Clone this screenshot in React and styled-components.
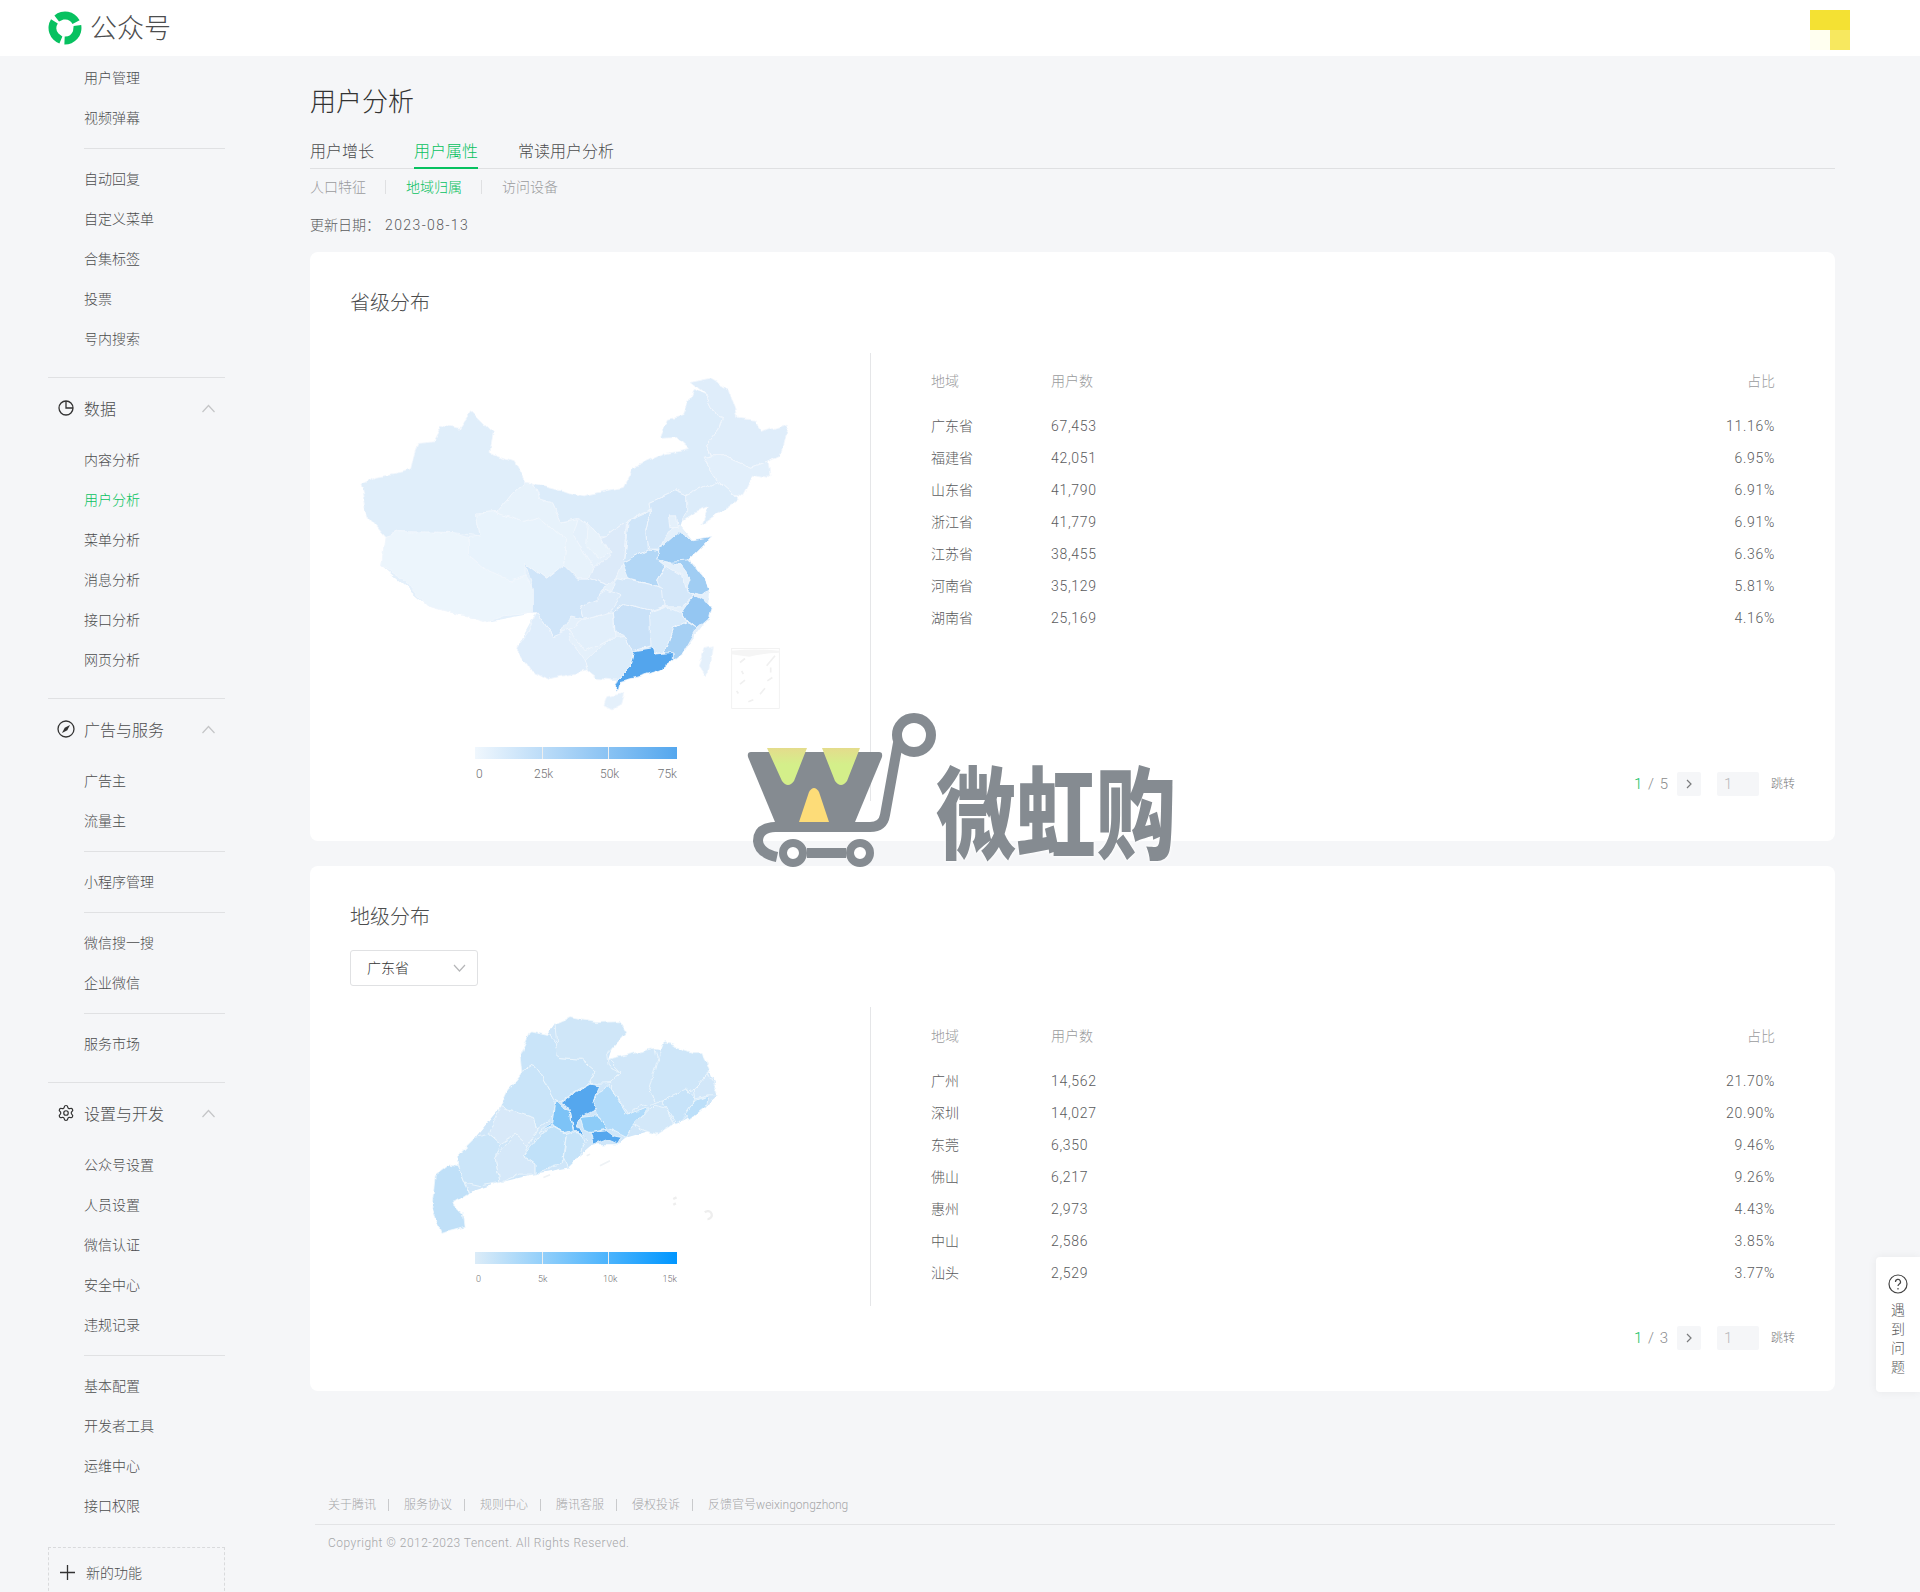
import React from 'react';
import styled, { createGlobalStyle } from 'styled-components';
import { Settings } from 'lucide-react';

const Global = createGlobalStyle`
  html, body { margin: 0; padding: 0; background: #f5f6f8; }
  body { font-family: Roboto, "Noto Sans CJK SC", sans-serif; font-weight: 300; color: #333; }
`;

const Page = styled.div`
  position: relative;
  width: 1920px;
  height: 1592px;
  overflow: hidden;
`;

const Header = styled.header`
  height: 56px;
  background: #fff;
  display: flex;
  align-items: center;
  justify-content: space-between;
  padding: 0 70px 0 48px;
`;

const Brand = styled.div`
  display: flex;
  align-items: center;
  gap: 8px;
  font-size: 27px;
  color: #4c4d4e;
  span { margin-bottom: 4px; }
`;

const Avatar = styled.div`
  width: 40px;
  height: 40px;
  margin-top: 4px;
  background:
    linear-gradient(#f4e133, #f4e133) top / 100% 50% no-repeat,
    linear-gradient(#f7e85f, #f7e85f) bottom right / 50% 50% no-repeat,
    #fffff0;
`;

const Body = styled.div`
  display: flex;
`;

const Side = styled.aside`
  width: 310px;
  flex: none;
  padding: 2px 85px 0 48px;
  box-sizing: border-box;
`;

const NavItem = styled.div`
  height: 40px;
  line-height: 40px;
  padding-left: 36px;
  font-size: 14px;
  color: ${p => (p.$active ? '#07c160' : '#4c4d4e')};
`;

const NavLine = styled.div`
  height: 1px;
  background: #e0e1e3;
  margin: ${p => (p.$full ? '18px 0 0' : '10px 0 10px 36px')};
`;

const NavHead = styled.div`
  display: flex;
  align-items: center;
  height: 60px;
  padding: 0 10px 2px 9px;
  font-size: 16px;
  color: #4c4d4e;
  gap: 9px;
  span { flex: 1; }
`;

const NewBox = styled.div`
  margin-top: 21px;
  height: 48px;
  border: 1px dashed #d9dadc;
  border-bottom: none;
  padding: 0 11px;
  display: flex;
  align-items: center;
  gap: 11px;
  font-size: 14px;
  color: #4c4d4e;
`;

const Main = styled.main`
  width: 1525px;
  flex: none;
`;

const Title = styled.h1`
  margin: 30px 0 0;
  font-size: 26px;
  line-height: 32px;
  font-weight: 300;
  color: #333;
`;

const Tabs = styled.div`
  display: flex;
  gap: 40px;
  margin-top: 20px;
  height: 30px;
  border-bottom: 1px solid #dfe0e2;
`;

const Tab = styled.div`
  font-size: 16px;
  line-height: 28px;
  height: 31px;
  box-sizing: border-box;
  color: ${p => (p.$active ? '#07c160' : '#4c4d4e')};
  border-bottom: ${p => (p.$active ? '2px solid #07c160' : 'none')};
`;

const SubTabs = styled.div`
  display: flex;
  align-items: center;
  height: 36px;
`;

const SubTab = styled.div`
  font-size: 14px;
  color: ${p => (p.$active ? '#07c160' : '#9a9b9d')};
  padding-right: 19px;
  margin-right: 20px;
  line-height: 14px;
  border-right: ${p => (p.$last ? 'none' : '1px solid #dfe0e2')};
`;

const UpdateDate = styled.div`
  font-size: 14px;
  line-height: 20px;
  margin-top: 10px;
  color: #5a5b5d;
  span { margin-left: 5px; letter-spacing: 1.4px; }
`;

const Card = styled.section`
  background: #fff;
  border-radius: 8px;
  box-sizing: border-box;
  height: ${p => p.$h}px;
  margin-top: ${p => p.$top}px;
  padding: 37px 40px 0;
`;

const CardTitle = styled.h2`
  margin: 0;
  font-size: 20px;
  line-height: 28px;
  font-weight: 300;
  color: #4c4d4e;
`;

const Select = styled.div`
  width: 128px;
  height: 36px;
  box-sizing: border-box;
  margin-top: 19px;
  border: 1px solid #e0e1e3;
  border-radius: 3px;
  padding: 0 11px 2px 16px;
  display: flex;
  align-items: center;
  justify-content: space-between;
  font-size: 14px;
  color: #333;
`;

const Split = styled.div`
  display: flex;
  margin-top: ${p => p.$top}px;
  height: ${p => p.$h}px;
`;

const MapCol = styled.div`
  width: 521px;
  flex: none;
  box-sizing: border-box;
  border-right: 1px solid #e5e6e8;
`;

const MapSvg = styled.svg`
  display: block;
  width: ${p => p.$w}px;
  height: ${p => p.$hh}px;
  margin: ${p => p.$m};
  overflow: visible;
`;

const Legend = styled.div`
  width: 202px;
  margin-left: 125px;
  margin-top: ${p => p.$top}px;
`;

const Bar = styled.div`
  height: 12px;
  background: ${p => p.$g};
  position: relative;
  &::before, &::after {
    content: '';
    position: absolute;
    top: 0;
    bottom: 0;
    width: 1px;
    background: #eee;
  }
  &::before { left: 67px; }
  &::after { left: 133px; }
`;

const LegendLabels = styled.div`
  display: grid;
  grid-template-columns: ${p => p.$cols};
  margin-top: 8px;
  font-size: ${p => p.$size}px;
  line-height: 14px;
  color: #6f7073;
  span:first-child { padding-left: 1px; }
`;

const TableWrap = styled.div`
  flex: 1;
  padding: ${p => p.$pt}px 20px 0 60px;
`;

const Row = styled.div`
  display: grid;
  grid-template-columns: 120px 1fr auto;
  height: ${p => (p.$head ? 37 : 32)}px;
  line-height: ${p => (p.$head ? 16 : 32)}px;
  font-size: 14px;
  color: ${p => (p.$head ? '#9a9b9d' : '#5a5b5d')};
  letter-spacing: ${p => (p.$head ? 0 : 0.7)}px;
  span:first-child { letter-spacing: 0; }
`;

const Pager = styled.div`
  display: flex;
  justify-content: flex-end;
  align-items: center;
  margin-top: ${p => p.$top}px;
  height: 24px;
  font-size: 15px;
  color: #8a8b8d;
  b { font-weight: 300; color: #07c160; }
`;

const PageNo = styled.div`
  word-spacing: 2px;
`;

const PageBtn = styled.div`
  width: 24px;
  height: 24px;
  margin: 0 16px 0 9px;
  background: #f5f6f8;
  border-radius: 2px;
  display: flex;
  align-items: center;
  justify-content: center;
`;

const PageInput = styled.div`
  width: 42px;
  height: 24px;
  line-height: 24px;
  box-sizing: border-box;
  padding-left: 7px;
  background: #f5f6f8;
  border-radius: 2px;
  color: #b5b6b8;
  margin-right: 12px;
`;

const Jump = styled.div`
  font-size: 12px;
  line-height: 24px;
  height: 24px;
  color: #7a7b7d;
`;

const Footer = styled.footer`
  margin: 100px 0 0 5px;
`;

const FootLinks = styled.div`
  display: flex;
  height: 28px;
  padding: 0 0 5px 13px;
  align-items: center;
  border-bottom: 1px solid #e3e4e6;
  font-size: 12px;
  color: #a5a6a8;
`;

const FootLink = styled.span`
  padding-right: ${p => (p.$last ? 0 : 12)}px;
  margin-right: ${p => (p.$last ? 0 : 15)}px;
  line-height: 12px;
  border-right: ${p => (p.$last ? 'none' : '1px solid #c9cacc')};
`;

const Copy = styled.div`
  padding-left: 13px;
  margin-top: 10px;
  font-size: 12px;
  line-height: 16px;
  color: #a5a6a8;
  letter-spacing: 0.47px;
`;

const Help = styled.div`
  position: absolute;
  right: 0;
  top: 1257px;
  width: 44px;
  height: 135px;
  background: #fff;
  border-radius: 4px 0 0 4px;
  box-shadow: 0 0 10px rgba(0,0,0,.06);
  display: flex;
  flex-direction: column;
  align-items: center;
  padding-top: 17px;
  box-sizing: border-box;
  font-size: 14px;
  line-height: 19px;
  color: #5a5b5d;
  svg { margin-bottom: 7px; }
`;

const Watermark = styled.div`
  position: absolute;
  left: 745px;
  top: 710px;
  width: 450px;
  height: 160px;
`;

const MarkText = styled.span`
  position: absolute;
  left: 191px;
  top: 47px;
  font-family: "Noto Sans CJK SC", sans-serif;
  font-weight: 900;
  font-size: 80px;
  line-height: 100px;
  color: #858b91;
  white-space: nowrap;
  transform: scaleY(1.25);
  text-shadow: 0 0 2px #fff, 0 0 4px #fff;
`;

const Chevron = () => (
  <svg width="13" height="13" viewBox="0 0 13 13" fill="none" stroke="#c4c5c7" strokeWidth="1.2"><path d="M.5 10 6.500 3.500 12.500 10" /></svg>
);

const chinaBase = '600,450 860,515 935,480 1020,525 1060,575 1050,630 1110,720 1105,810 1030,910 960,965 840,1000 745,965 625,990 530,900 590,790 435,820 265,770 125,650 135,562 410,495 555,400';

const chinaShapes = [
  ['#e0eefa', '60,405 110,382 215,362 235,280 280,275 305,228 355,240 395,185 460,250 450,310 520,335 555,400 520,430 470,490 410,495 420,560 335,550 180,548 135,562 90,510 75,470'],
  ['#ecf5fc', '135,562 180,548 335,550 385,565 385,620 440,665 510,695 555,680 580,720 580,790 545,795 490,800 435,820 335,790 265,770 190,690 125,650'],
  ['#e8f3fc', '410,495 470,490 550,520 600,505 680,575 670,650 620,690 555,640 555,680 510,695 440,665 385,620 385,565 420,560'],
  ['#e7f2fb', '555,400 580,402 600,450 635,460 660,515 715,505 700,555 745,630 760,650 745,690 710,690 670,650 680,575 600,505 550,520 470,490 520,430'],
  ['#dcecfa', '580,402 730,440 850,415 880,355 980,310 1045,298 1010,265 960,268 985,210 1030,200 1060,120 1100,140 1130,200 1150,205 1140,240 1100,290 1115,320 1090,325 1135,395 1040,440 1005,425 930,460 935,480 860,515 800,560 780,560 745,520 715,505 660,515 635,460 600,450'],
  ['#dfedfa', '1050,100 1110,88 1165,120 1195,205 1250,210 1265,250 1345,225 1320,320 1285,335 1230,355 1150,320 1115,320 1100,290 1140,240 1150,205 1130,200 1100,140'],
  ['#e2effb', '1090,325 1115,320 1150,320 1230,355 1285,335 1290,385 1240,375 1205,440 1180,435 1135,395'],
  ['#dcecfa', '1040,440 1135,395 1180,435 1195,450 1085,525 1105,475 1065,490 1020,520 1005,490'],
  ['#d2e6f9', '930,460 1005,425 1040,440 1040,485 1020,525 985,545 960,600 925,600 920,545 935,490'],
  ['#cfe5f9', '865,515 935,485 920,545 925,600 850,640'],
  ['#e4f0fb', '985,500 1010,500 1015,535 990,535'],
  ['#dceaf9', '800,560 860,515 850,640 830,685 800,710 745,690 760,650 810,625 785,565'],
  ['#9ccbf3', '960,600 1020,548 1060,575 1115,565 1050,630 1030,650 975,640 950,630'],
  ['#b3d7f6', '850,640 925,600 960,605 950,630 975,650 950,690 970,720 925,705 870,690'],
  ['#a0cdf3', '985,640 1050,635 1085,680 1110,720 1085,740 1035,730 1050,690 1020,650'],
  ['#94c6f2', '1060,740 1115,770 1105,810 1070,840 1040,815 1025,790'],
  ['#d4e7f9', '950,690 975,650 1025,680 1040,730 1060,740 1025,770 980,770 960,725'],
  ['#a6d0f4', '1040,820 1070,840 1030,910 1000,935 975,905 1000,840'],
  ['#d8eafa', '925,790 980,770 1025,790 1040,820 1000,840 975,910 930,915 915,840'],
  ['#c9e1f8', '820,785 850,765 925,785 930,890 880,905 860,865 825,850'],
  ['#d4e7f9', '800,770 830,685 925,705 970,720 975,770 925,785 850,765 820,785'],
  ['#53a5ed', '880,905 940,895 945,915 1000,910 1000,935 960,965 900,985 840,1000 835,1025 822,1010 830,990 870,950'],
  ['#dcecfa', '735,935 800,870 860,865 880,905 870,950 830,990 770,985 745,965'],
  ['#e4f0fb', '800,1040 855,1030 845,1065 815,1082 792,1070'],
  ['#e2effb', '685,840 730,810 820,790 825,870 800,870 735,905'],
  ['#dcebfa', '725,770 800,725 840,740 805,790 735,810'],
  ['#d0e5f9', '555,640 620,690 670,650 710,690 745,690 800,710 770,750 725,770 735,810 690,800 660,855 640,860 590,790 580,790 580,720'],
  ['#dfedfb', '590,790 640,860 685,840 695,880 735,935 745,965 625,990 570,960 530,900 565,850'],
  ['#e7f2fb', '745,520 780,560 810,610 775,630 740,590'],
  ['#e4f0fb', '1095,895 1120,890 1110,960 1095,980 1075,950'],
];

const gdBase = '300,320 365,215 465,70 660,62 625,175 765,142 880,155 930,210 955,285 915,320 820,370 680,410 655,430 580,430 540,465 505,500 405,520 300,545 205,575 175,495 225,410';

const gdShapes = [
  ['#c0e0f8', '150,490 175,495 195,545 205,575 155,605 190,640 195,680 125,698 95,620 105,525'],
  ['#cbe5f9', '175,460 225,410 265,400 300,430 285,470 300,545 240,555 195,545 175,495'],
  ['#d5e8f9', '285,470 345,400 385,435 370,465 405,490 405,520 360,520 300,545'],
  ['#d8e9f9', '265,400 300,320 400,350 410,385 385,435 345,400 300,430'],
  ['#c9e4f9', '300,320 325,265 365,215 400,190 420,215 465,295 470,300 450,355 410,385 400,350'],
  ['#c9e4f9', '365,215 360,160 390,92 450,105 470,130 475,170 545,175 585,210 565,250 520,275 480,305 465,295 420,215 400,190'],
  ['#cfe6f8', '465,70 510,50 590,65 660,62 680,95 620,160 625,195 660,210 635,245 570,248 585,210 545,175 475,170 470,130'],
  ['#d1e7f9', '625,175 765,142 775,190 750,260 765,305 700,325 690,345 635,265 635,245 660,210'],
  ['#cee6f9', '770,185 795,125 880,155 910,155 930,210 880,265 780,300 765,305 750,260'],
  ['#d2e7f9', '880,265 925,215 955,285 925,285 885,295'],
  ['#c7e3f9', '785,300 860,265 885,295 855,345 830,370'],
  ['#bcdff9', '855,340 885,300 925,285 915,320 870,355'],
  ['#d3e8f9', '700,370 765,310 800,320 820,370 770,400 725,385'],
  ['#b1dbfa', '580,300 625,250 680,340 750,320 700,370 680,410 620,380 590,345'],
  ['#55a7ee', '480,310 525,275 570,250 600,255 580,300 590,325 540,350 530,370 560,420 520,380 510,325'],
  ['#7dc3f7', '465,300 485,320 510,330 520,390 495,395 460,375 415,395 455,370'],
  ['#8dccf8', '540,350 585,345 620,370 620,385 570,395 550,385'],
  ['#55a7ee', '570,395 620,390 640,405 665,410 655,430 620,415 582,430'],
  ['#c0e1f9', '370,465 420,400 465,380 500,400 490,450 490,490 450,500 405,520 405,490'],
  ['#c5e3f9', '500,400 530,392 555,425 540,465 505,500 490,470'],
];

const provinces = [
  ['广东省', '67,453', '11.16%'], ['福建省', '42,051', '6.95%'], ['山东省', '41,790', '6.91%'],
  ['浙江省', '41,779', '6.91%'], ['江苏省', '38,455', '6.36%'], ['河南省', '35,129', '5.81%'], ['湖南省', '25,169', '4.16%'],
];
const cities = [
  ['广州', '14,562', '21.70%'], ['深圳', '14,027', '20.90%'], ['东莞', '6,350', '9.46%'],
  ['佛山', '6,217', '9.26%'], ['惠州', '2,973', '4.43%'], ['中山', '2,586', '3.85%'], ['汕头', '2,529', '3.77%'],
];

// rough map borders: displacement so the polygons don't look cut with a ruler
const Rough = ({ id, freq, scale }) => (
  <filter id={id} filterUnits="userSpaceOnUse" x="0" y="0" width="1500" height="1200">
    <feTurbulence type="fractalNoise" baseFrequency={freq} numOctaves="4" seed="4" />
    <feDisplacementMap in="SourceGraphic" scale={scale} xChannelSelector="R" yChannelSelector="G" />
  </filter>
);

const Shapes = ({ base, data, line, baseFill, filter }) => (
  <g filter={`url(#${filter})`}>
    <polygon points={base} fill={baseFill} />
    {data.map(([c, pts], i) => (
      <polygon key={i} points={pts} fill={c} stroke={line} strokeWidth="2.5" strokeLinejoin="round" />
    ))}
  </g>
);

const DataTable = ({ rows, pt }) => (
  <TableWrap $pt={pt}>
    <Row $head><span>地域</span><span>用户数</span><span>占比</span></Row>
    {rows.map(r => <Row key={r[0]}><span>{r[0]}</span><span>{r[1]}</span><span>{r[2]}</span></Row>)}
  </TableWrap>
);

const Pagination = ({ top, pages }) => (
  <Pager $top={top}>
    <PageNo><b>1</b> / {pages}</PageNo>
    <PageBtn><svg width="10" height="10" viewBox="0 0 10 10" fill="none" stroke="#7a7b7d" strokeWidth="1.2"><path d="M3 1l4 4-4 4" /></svg></PageBtn>
    <PageInput>1</PageInput>
    <Jump>跳转</Jump>
  </Pager>
);

const nav1 = ['用户管理', '视频弹幕'];
const nav2 = ['自动回复', '自定义菜单', '合集标签', '投票', '号内搜索'];
const nav3 = ['内容分析', '用户分析', '菜单分析', '消息分析', '接口分析', '网页分析'];
const nav4 = ['公众号设置', '人员设置', '微信认证', '安全中心', '违规记录'];
const nav5 = ['基本配置', '开发者工具', '运维中心', '接口权限'];
const footLinks = ['关于腾讯', '服务协议', '规则中心', '腾讯客服', '侵权投诉', '反馈官号weixingongzhong'];

const swoosh = 'M-10.600 -12.600 A16.500 16.500 0 0 1 14.600 -7.700 L7.500 -4 A8.500 8.500 0 0 0 -1.500 -8.400 L-6 -6.500 Z';

export default function App() {
  return (
    <Page>
      <Global />
      <Header>
        <Brand>
          <svg width="34" height="34" viewBox="-17 -17 34 34" fill="#07c160">
            <path d={swoosh} />
            <path d={swoosh} transform="rotate(120)" />
            <path d={swoosh} transform="rotate(240)" />
          </svg>
          <span>公众号</span>
        </Brand>
        <Avatar />
      </Header>
      <Body>
        <Side>
          {nav1.map(t => <NavItem key={t}>{t}</NavItem>)}
          <NavLine />
          {nav2.map(t => <NavItem key={t}>{t}</NavItem>)}
          <NavLine $full />
          <NavHead>
            <svg width="18" height="18" viewBox="0 0 18 18" fill="none" stroke="#333" strokeWidth="1.300"><circle cx="9" cy="9" r="7" /><path d="M9 2v7h7" /></svg>
            <span>数据</span><Chevron />
          </NavHead>
          {nav3.map(t => <NavItem key={t} $active={t === '用户分析'}>{t}</NavItem>)}
          <NavLine $full />
          <NavHead>
            <svg width="18" height="18" viewBox="0 0 18 18" fill="none" stroke="#333" strokeWidth="1.300"><circle cx="9" cy="9" r="8" /><path d="M13 5 10.300 10.300 5 13 7.700 7.700z" fill="#333" stroke="none" /></svg>
            <span>广告与服务</span><Chevron />
          </NavHead>
          {['广告主', '流量主'].map(t => <NavItem key={t}>{t}</NavItem>)}
          <NavLine />
          <NavItem>小程序管理</NavItem>
          <NavLine />
          {['微信搜一搜', '企业微信'].map(t => <NavItem key={t}>{t}</NavItem>)}
          <NavLine />
          <NavItem>服务市场</NavItem>
          <NavLine $full />
          <NavHead>
            <Settings size={18} color="#333" strokeWidth={1.6} />
            <span>设置与开发</span><Chevron />
          </NavHead>
          {nav4.map(t => <NavItem key={t}>{t}</NavItem>)}
          <NavLine />
          {nav5.map(t => <NavItem key={t}>{t}</NavItem>)}
          <NewBox>
            <svg width="15" height="15" viewBox="0 0 15 15" stroke="#333" strokeWidth="1.300"><path d="M7.500 0v15M0 7.500h15" /></svg>
            新的功能
          </NewBox>
        </Side>
        <Main>
          <Title>用户分析</Title>
          <Tabs>
            <Tab>用户增长</Tab>
            <Tab $active>用户属性</Tab>
            <Tab>常读用户分析</Tab>
          </Tabs>
          <SubTabs>
            <SubTab>人口特征</SubTab>
            <SubTab $active>地域归属</SubTab>
            <SubTab $last>访问设备</SubTab>
          </SubTabs>
          <UpdateDate>更新日期：<span>2023-08-13</span></UpdateDate>
          <Card $h={589} $top={17}>
            <CardTitle>省级分布</CardTitle>
            <Split $top={36} $h={448}>
              <MapCol>
                <MapSvg viewBox="0 0 1440 1160" $w={480} $hh={387} $m="-4px 0 0 -10px">
                  <defs><Rough id="roughCn" freq="0.02" scale="22" /></defs>
                  <Shapes base={chinaBase} baseFill="#e4f0fb" data={chinaShapes} line="#f2f7fc" filter="roughCn" />
                  <rect x="1175" y="898" width="143" height="180" fill="#fff" stroke="#f0f0f0" strokeWidth="2.500" />
                  <path d="M1175 905q70 -8 143 0v6q-60 2 -90 12q-30 -4 -53 -8z" fill="#f5f5f5" />
                  <path d="M1200 940l15 -12M1205 965l5 10M1200 1005l15 -12M1292 955v15M1282 995l15 -10M1190 1025l5 8M1225 1058l15 -6M1260 1035l15 -18M1280 950l25 -30" stroke="#f0f0f0" strokeWidth="5" fill="none" />
                </MapSvg>
                <Legend $top={11}>
                  <Bar $g="linear-gradient(90deg,#f0f7fd,#54a7ee)" />
                  <LegendLabels $size={12} $cols="59px 66px 1fr auto"><span>0</span><span>25k</span><span>50k</span><span>75k</span></LegendLabels>
                </Legend>
              </MapCol>
              <DataTable rows={provinces} pt={20} />
            </Split>
            <Pagination top={-29} pages={5} />
          </Card>
          <Card $h={525} $top={25}>
            <CardTitle>地级分布</CardTitle>
            <Select>
              广东省
              <svg width="13" height="13" viewBox="0 0 13 13" fill="none" stroke="#b5b6b8" strokeWidth="1.200"><path d="M1 4l5.500 6L12 4" /></svg>
            </Select>
            <Split $top={21} $h={299}>
              <MapCol>
                <MapSvg viewBox="0 0 1200 730" $w={400} $hh={243} $m="-6px 0 0 50px">
                  <defs><Rough id="roughGd" freq="0.03" scale="18" /></defs>
                  <Shapes base={gdBase} baseFill="#cfe6f9" data={gdShapes} line="#eef6fc" filter="roughGd" />
                  <path d="M820 595l10 -5M820 612l8 -4M915 635a12 12 0 1 1 8 20" stroke="#eee" strokeWidth="7" fill="none" />
                  <path d="M560 465l10 -5M600 495l30 -15M430 530l20 -8" stroke="#eef2f5" strokeWidth="5" fill="none" />
                </MapSvg>
                <Legend $top={8}>
                  <Bar $g="linear-gradient(90deg,#dcecf8,#0096ff)" />
                  <LegendLabels $size={9} $cols="63px 65px 1fr auto"><span>0</span><span>5k</span><span>10k</span><span>15k</span></LegendLabels>
                </Legend>
              </MapCol>
              <DataTable rows={cities} pt={21} />
            </Split>
            <Pagination top={20} pages={3} />
          </Card>
          <Footer>
            <FootLinks>
              {footLinks.map((t, i) => <FootLink key={t} $last={i === footLinks.length - 1}>{t}</FootLink>)}
            </FootLinks>
            <Copy>Copyright © 2012-2023 Tencent. All Rights Reserved.</Copy>
          </Footer>
        </Main>
      </Body>
      <Help>
        <svg width="20" height="20" viewBox="0 0 20 20" fill="none" stroke="#444" strokeWidth="1.200"><circle cx="10" cy="10" r="9" /><path d="M7.500 8a2.500 2.500 0 1 1 3.800 2c-.9.600-1.300 1-1.300 2" /><path d="M10 14v1.500" /></svg>
        <span>遇</span><span>到</span><span>问</span><span>题</span>
      </Help>
      <Watermark>
        <svg width="200" height="160" viewBox="0 0 200 160">
          <defs>
            <linearGradient id="cup" x1="0" y1="0" x2="0" y2="1"><stop offset="0" stopColor="#e4dc8c" /><stop offset=".45" stopColor="#d4ef8a" /></linearGradient>
          </defs>
          <path d="M6 42h128q4 0 3 5l-27 65H30L3 47q-1 -5 3 -5z" fill="#858b91" />
          <path d="M22 38h40l-13 33q-6 8 -12 0zM77 38h38l-13 33q-6 8 -12 0z" fill="url(#cup)" />
          <path d="M54 112l10 -30q5 -8 10 0l10 30z" fill="#fddc78" />
          <path d="M40 117h85q13 0 15 -12l13 -72" fill="none" stroke="#858b91" strokeWidth="10" />
          <circle cx="169" cy="25" r="17" fill="#fff" stroke="#858b91" strokeWidth="10" />
          <path d="M42 117H30q-17 1 -17 14q1 12 19 16" fill="none" stroke="#858b91" strokeWidth="10" />
          <circle cx="48" cy="143" r="10" fill="#fff" stroke="#858b91" strokeWidth="8" />
          <circle cx="115" cy="143" r="10" fill="#fff" stroke="#858b91" strokeWidth="8" />
          <path d="M62 143h39" stroke="#858b91" strokeWidth="10" />
        </svg>
        <MarkText>微虹购</MarkText>
      </Watermark>
    </Page>
  );
}
